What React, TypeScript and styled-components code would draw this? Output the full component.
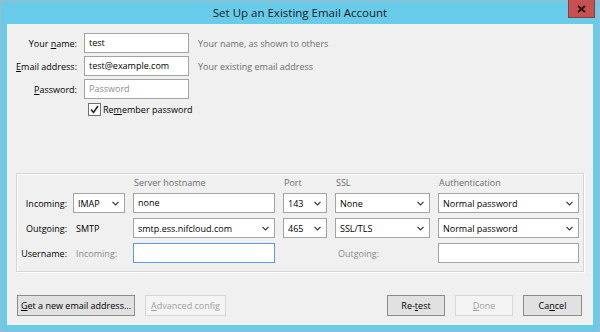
import styled, { createGlobalStyle } from 'styled-components'

const GlobalStyle = createGlobalStyle`
  html, body { margin: 0; padding: 0; background: #fff; }
  body {
    font-family: "Open Sans", "Noto Sans", sans-serif;
    font-size: 9px;
    color: #000;
  }
  * { box-sizing: border-box; }
`

const Window = styled.div`
  width: 600px;
  height: 332px;
  background: #69cbea;
  border: 1px solid #a6b8c2;
  padding: 0 6px 6px 6px;
  display: flex;
  flex-direction: column;
`
const TitleBar = styled.div`
  height: 23px;
  display: flex;
  align-items: flex-start;
`
const Title = styled.div`
  flex: 1;
  text-align: center;
  padding-left: 25px;
  font-size: 11.5px;
  line-height: 23px;
  color: #1a1a1a;
`
const CloseButton = styled.div`
  width: 27px;
  height: 18px;
  margin-top: -1px;
  margin-right: -2px;
  background: #c75050;
  border: 1px solid #8d3a3a;
  border-top: none;
  display: flex;
  align-items: center;
  justify-content: center;
`
const Content = styled.div`
  flex: 1;
  background: #f0f0f0;
  display: flex;
  flex-direction: column;
`
const TopForm = styled.div`
  display: grid;
  grid-template-columns: 70px 105px auto;
  grid-template-rows: 20px 20px 20px 14px;
  column-gap: 7px;
  row-gap: 3px;
  padding-top: 9px;
  align-items: center;
`
const Label = styled.label`
  text-align: right;
  white-space: nowrap;
`
const TextBox = styled.div<{ $focused?: boolean; $placeholder?: boolean }>`
  height: 20px;
  background: #fff;
  border: 1px solid ${p => (p.$focused ? '#569de5' : '#a3a3a3')};
  padding: 0 4px;
  line-height: 18px;
  white-space: nowrap;
  overflow: hidden;
  color: ${p => (p.$placeholder ? '#8f8f8f' : '#000')};
`
const Hint = styled.span`
  color: #6d6d6d;
  margin-left: 2px;
  white-space: nowrap;
`
const CheckRow = styled.div`
  grid-column: 2 / 4;
  display: flex;
  align-items: center;
  gap: 2px;
  padding-left: 4px;
  height: 14px;
`
const CheckBox = styled.div`
  width: 13px;
  height: 13px;
  background: #fff;
  border: 1px solid #707070;
  display: flex;
  align-items: center;
  justify-content: center;
`
const Group = styled.div`
  margin: 57px 9px 0 9px;
  border: 1px solid #d5d5d5;
  box-shadow: inset 1px 1px 0 #fff, 1px 1px 0 #fff;
  display: grid;
  grid-template-columns: 48px 52px 142px 44px 95px 141px;
  grid-template-rows: 12px 20px 20px 20px;
  column-gap: 8px;
  row-gap: 5px;
  padding: 2px 0 8px 0;
  align-items: center;
`
const ColHead = styled.div<{ $col: number }>`
  grid-column: ${p => p.$col};
  color: #6d6d6d;
  padding-left: 1px;
  white-space: nowrap;
`
const RowLabel = styled.div`
  grid-column: 1;
  text-align: right;
  margin-right: -2px;
  white-space: nowrap;
`
const Plain = styled.div<{ $muted?: boolean }>`
  padding-left: 3px;
  color: ${p => (p.$muted ? '#8a8a8a' : '#000')};
  white-space: nowrap;
`
const ComboBox = styled.div`
  height: 20px;
  background: #fff;
  border: 1px solid #a3a3a3;
  display: flex;
  align-items: center;
  padding: 0 5px 0 4px;
  white-space: nowrap;
  span { flex: 1; overflow: hidden; }
`
const ButtonBar = styled.div`
  margin-top: auto;
  padding: 0 11px 9px 10px;
  display: flex;
  align-items: center;
`
const Button = styled.div<{ $w: number; $disabled?: boolean }>`
  width: ${p => p.$w}px;
  height: 21px;
  display: flex;
  align-items: center;
  justify-content: center;
  white-space: nowrap;
  background: ${p => (p.$disabled ? '#f4f4f4' : '#e1e1e1')};
  border: 1px solid ${p => (p.$disabled ? '#d6d6d6' : '#8c8c8c')};
  color: ${p => (p.$disabled ? '#a0a0a0' : '#000')};
  & + & { margin-left: 10px; }
`
const Spacer = styled.div`
  flex: 1;
`

const Chevron = () => (
  <svg width="7" height="5" viewBox="0 0 7 5">
    <path d="M0.5 0.8 L3.5 3.8 L6.5 0.8" fill="none" stroke="#333" strokeWidth="1.2" />
  </svg>
)

const Combo = ({ value }: { value: string }) => (
  <ComboBox>
    <span>{value}</span>
    <Chevron />
  </ComboBox>
)

export default function App() {
  return (
    <>
      <GlobalStyle />
      <Window>
        <TitleBar>
          <Title>Set Up an Existing Email Account</Title>
          <CloseButton>
            <svg width="9" height="8" viewBox="0 0 9 8">
              <path d="M1 1 L8 7 M8 1 L1 7" stroke="#2a1414" strokeWidth="2" />
            </svg>
          </CloseButton>
        </TitleBar>
        <Content>
          <TopForm>
            <Label>Your <u>n</u>ame:</Label>
            <TextBox>test</TextBox>
            <Hint>Your name, as shown to others</Hint>
            <Label><u>E</u>mail address:</Label>
            <TextBox>test@example.com</TextBox>
            <Hint>Your existing email address</Hint>
            <Label><u>P</u>assword:</Label>
            <TextBox $placeholder>Password</TextBox>
            <span />
            <CheckRow>
              <CheckBox>
                <svg width="9" height="9" viewBox="0 0 9 9">
                  <path d="M1 4.5 L3.5 7.5 L8 1" fill="none" stroke="#222" strokeWidth="1.6" />
                </svg>
              </CheckBox>
              <span>Re<u>m</u>ember password</span>
            </CheckRow>
          </TopForm>

          <Group>
            <span />
            <span />
            <ColHead $col={3}>Server hostname</ColHead>
            <ColHead $col={4}>Port</ColHead>
            <ColHead $col={5}>SSL</ColHead>
            <ColHead $col={6}>Authentication</ColHead>

            <RowLabel>Incoming:</RowLabel>
            <Combo value="IMAP" />
            <TextBox>none</TextBox>
            <Combo value="143" />
            <Combo value="None" />
            <Combo value="Normal password" />

            <RowLabel>Outgoing:</RowLabel>
            <Plain>SMTP</Plain>
            <Combo value="smtp.ess.nifcloud.com" />
            <Combo value="465" />
            <Combo value="SSL/TLS" />
            <Combo value="Normal password" />

            <RowLabel>Username:</RowLabel>
            <Plain $muted>Incoming:</Plain>
            <TextBox $focused />
            <span />
            <Plain $muted>Outgoing:</Plain>
            <TextBox />
          </Group>

          <ButtonBar>
            <Button $w={118}><span><u>G</u>et a new email address...</span></Button>
            <Button $w={81} $disabled><span><u>A</u>dvanced config</span></Button>
            <Spacer />
            <Button $w={58}><span>Re-<u>t</u>est</span></Button>
            <Button $w={58} $disabled><span><u>D</u>one</span></Button>
            <Button $w={59}><span>Ca<u>n</u>cel</span></Button>
          </ButtonBar>
        </Content>
      </Window>
    </>
  )
}
